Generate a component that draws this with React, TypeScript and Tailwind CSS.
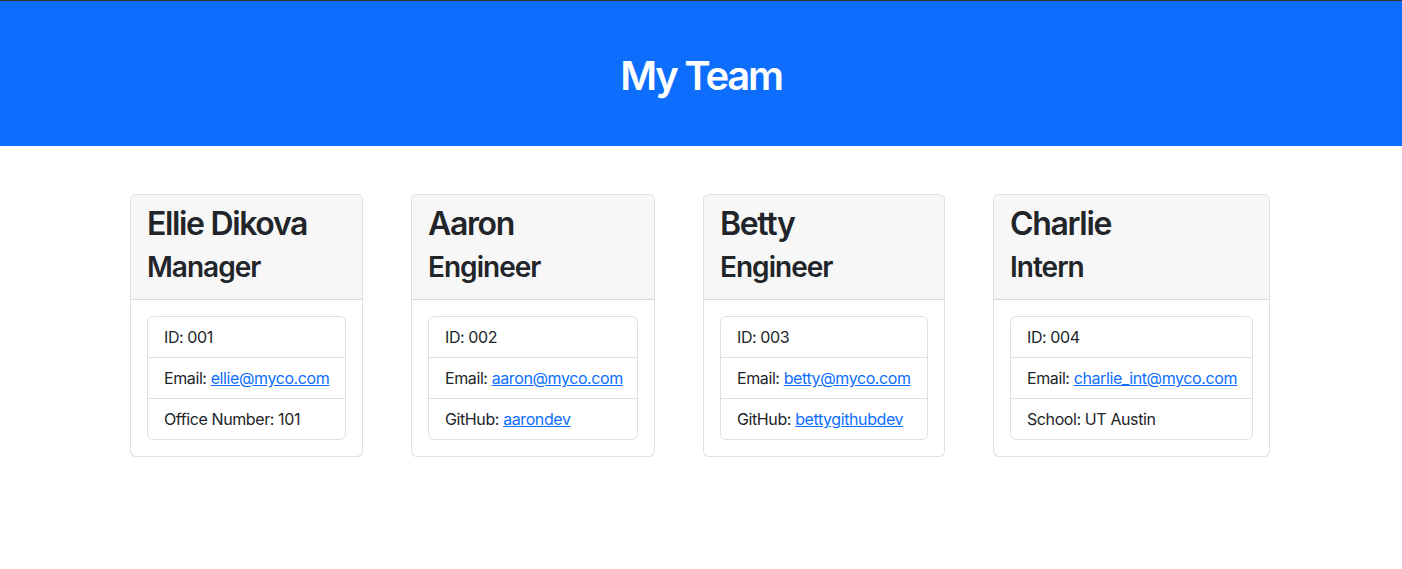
import React from 'react'

interface Member {
  name: string
  role: string
  id: string
  email: string
  extraLabel: string
  extraValue: string
  extraLink?: boolean
  width: string
}

const team: Member[] = [
  { name: 'Ellie Dikova', role: 'Manager', id: '001', email: 'ellie@myco.com', extraLabel: 'Office Number', extraValue: '101', width: 'w-[233px]' },
  { name: 'Aaron', role: 'Engineer', id: '002', email: 'aaron@myco.com', extraLabel: 'GitHub', extraValue: 'aarondev', extraLink: true, width: 'w-[244px]' },
  { name: 'Betty', role: 'Engineer', id: '003', email: 'betty@myco.com', extraLabel: 'GitHub', extraValue: 'bettygithubdev', extraLink: true, width: 'w-[242px]' },
  { name: 'Charlie', role: 'Intern', id: '004', email: 'charlie_int@myco.com', extraLabel: 'School', extraValue: 'UT Austin', width: 'w-[277px]' },
]

const Card = ({ member }: { member: Member }) => {
  return (
    <div className={`flex shrink-0 flex-col rounded-[6px] border border-black/[.125] bg-white ${member.width}`}>
      <div className="rounded-t-[5px] border-b border-black/[.125] bg-[#f7f7f7] px-4 pb-[6px] pt-[10px]">
        <h2 className="mb-2 whitespace-nowrap text-[32px] font-semibold leading-[1.2] tracking-[-0.042em]">{member.name}</h2>
        <h3 className="mb-2 whitespace-nowrap text-[28px] font-semibold leading-[1.2] tracking-[-0.035em]">{member.role}</h3>
      </div>
      <div className="p-4">
        <ul className="rounded-[6px] border border-black/[.125] text-base leading-6 tracking-[-0.025em]">
          <li className="whitespace-nowrap px-4 py-2">ID: {member.id}</li>
          <li className="whitespace-nowrap border-t border-black/[.125] px-4 py-2">
            Email:{' '}
            <a href={`mailto:${member.email}`} className="text-[#0d6efd] underline">
              {member.email}
            </a>
          </li>
          <li className="whitespace-nowrap border-t border-black/[.125] px-4 py-2">
            {member.extraLabel}:{' '}
            {member.extraLink ? (
              <a href="#" className="text-[#0d6efd] underline">
                {member.extraValue}
              </a>
            ) : (
              member.extraValue
            )}
          </li>
        </ul>
      </div>
    </div>
  )
}

const App = () => {
  return (
    <div className="min-h-screen bg-white text-[#212529]" style={{ fontFamily: 'Inter, "Noto Sans", sans-serif' }}>
      <header className="flex h-[146px] items-center justify-center border-t border-[#333] bg-[#0d6efd] pt-1">
        <h1 className="text-[40px] font-semibold leading-[1.2] tracking-[-0.055em] text-white">My Team</h1>
      </header>
      <main className="mt-12 flex items-start justify-center gap-12 pr-[2px]">
        {team.map((m) => (
          <Card key={m.id} member={m} />
        ))}
      </main>
    </div>
  )
}

export default App
